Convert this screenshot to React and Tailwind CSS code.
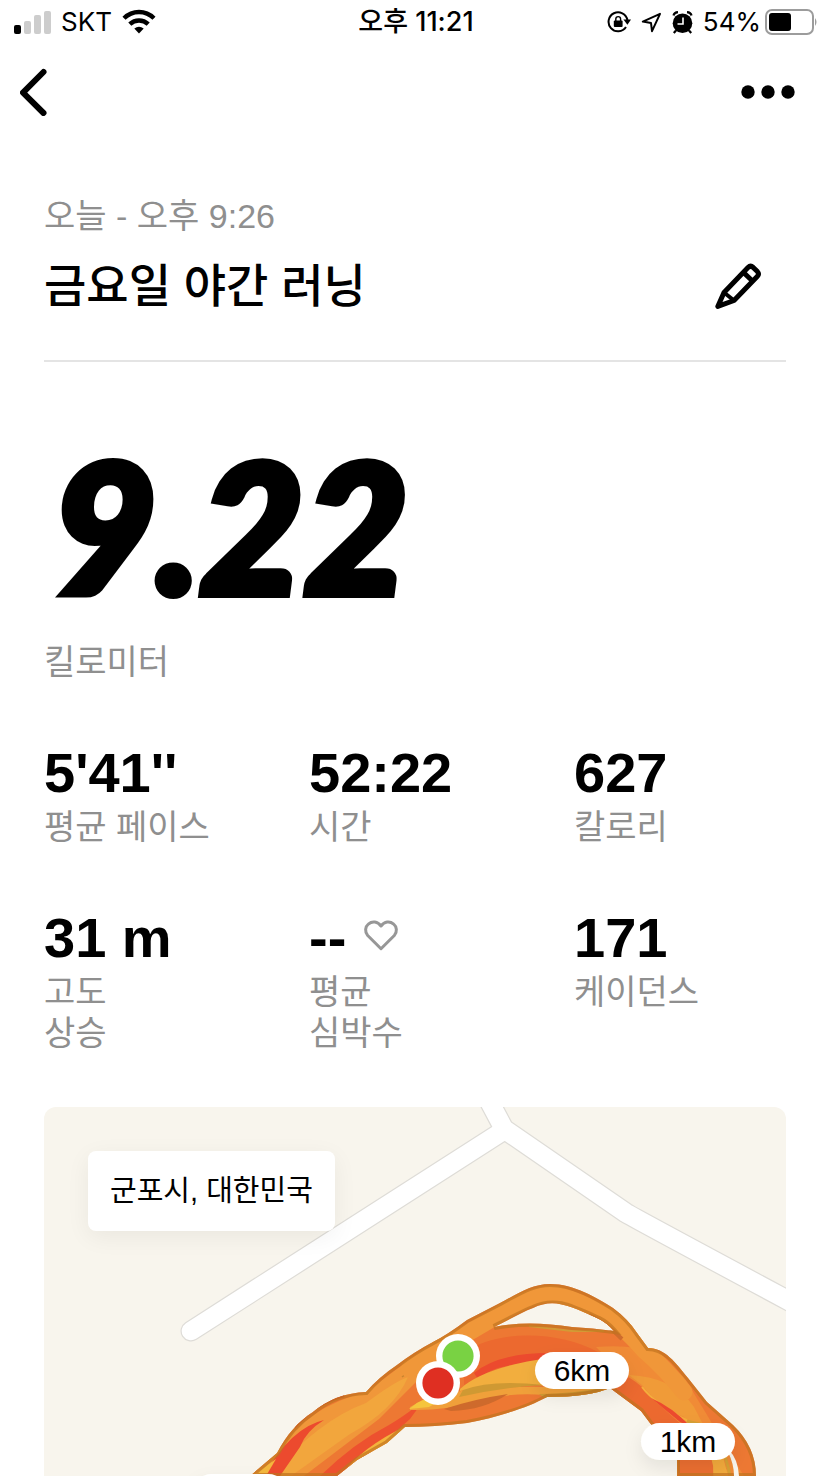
import React from 'react';

const stats = [
  { value: "5'41''", label: ['평균 페이스'] },
  { value: '52:22', label: ['시간'] },
  { value: '627', label: ['칼로리'] },
  { value: '31 m', label: ['고도', '상승'] },
  { value: '--', label: ['평균', '심박수'], heart: true },
  { value: '171', label: ['케이던스'] },
];

const markers = [
  { x: 491, y: 245, text: '6km' },
  { x: 597, y: 316, text: '1km' },
];

const TRACK =
  'M206 369 L233 346 C243 327 254 315 269 305 Q292 286 322 285 Q335 270 353 258 Q370 245 389 235 Q403 228 423 213 L456 196 C475 186 488 177 506 177 C530 177 553 191 569 201 Q584 212 593 226 L604 241 C621 241 632 256 644 271 L663 295 L689 318 Q712 340 712 369 L633 369 L633 350 L606 316 L597 304 L566 281 Q545 290 503 290 C485 300 455 310 423 316 Q390 320 361 320 L343 336 L313 353 L293 369 Z M450 220 C465 213 478 205 489 201 C510 191 524 198 555 212 Q563 216 570 224 Q548 221 528 220 C500 216 475 215 450 220 Z';

function StatusBar() {
  return (
    <div className="grid h-11 grid-cols-3 items-center pl-3.5 pr-3 font-['Inter','Noto_Sans_CJK_KR',sans-serif] text-[26px] leading-8">
      <div className="flex items-center gap-2.5">
        <svg width="37" height="24" viewBox="0 0 37 24" aria-hidden="true">
          <rect x="0" y="15" width="7" height="9" rx="2" fill="#000" />
          <rect x="10" y="11" width="7" height="13" rx="2" fill="#cdcdcd" />
          <rect x="20" y="5" width="7" height="19" rx="2" fill="#cdcdcd" />
          <rect x="30" y="1" width="7" height="23" rx="2" fill="#cdcdcd" />
        </svg>
        <span>SKT</span>
        <svg width="34" height="26" viewBox="0 0 34 26" fill="none" stroke="#000" strokeWidth="4.4" aria-hidden="true">
          <path d="M2 9.2 C10.5 .9 23.5 .9 32 9.2" />
          <path d="M7.8 15.2 C13 10.2 21 10.2 26.2 15.2" />
          <path d="M12.3 19.6 Q17 15.8 21.7 19.6 L17 24.6 Z" fill="#000" stroke="none" />
        </svg>
      </div>
      <div className="text-center text-[27px] font-medium">오후 11:21</div>
      <div className="flex items-center justify-end gap-2.5">
        <svg width="24" height="24" viewBox="0 0 24 24" fill="none" stroke="#000" strokeWidth="2" aria-hidden="true">
          <path d="M20.4 10 A9.5 9.5 0 1 0 19 17" />
          <path d="M16.4 9.6 H24 L20.4 14.8 Z" fill="#000" stroke="none" />
          <rect x="6.8" y="10.5" width="8.8" height="6.5" rx="1" fill="#000" stroke="none" />
          <path d="M8.8 11 V9 A2.4 2.4 0 0 1 13.6 9 V11" strokeWidth="1.4" />
        </svg>
        <svg width="21" height="21" viewBox="0 0 21 21" fill="none" stroke="#000" strokeWidth="2" strokeLinejoin="round" aria-hidden="true">
          <path d="M19 1.8 L1.8 9.6 L10 11 L11 19.2 Z" />
        </svg>
        <svg width="21" height="23" viewBox="0 0 21 23" aria-hidden="true">
          <circle cx="10.5" cy="12.3" r="9.8" />
          <path d="M1.5 4.6 Q2.2 1.4 6 1.2 M19.5 4.6 Q18.8 1.4 15 1.2 M4 19.5 L1.8 22 M17 19.5 L19.2 22" fill="none" stroke="#000" strokeWidth="2.2" />
          <path d="M11 6.5 V13 H5.5" fill="none" stroke="#fff" strokeWidth="1.6" />
        </svg>
        <div className="flex items-center gap-1">
          <span>54%</span>
          <svg width="53" height="26" viewBox="0 0 53 26" aria-hidden="true">
            <rect x="1" y="1" width="47" height="24" rx="6" fill="none" stroke="#9c9c9c" strokeWidth="2" />
            <rect x="4" y="4" width="22" height="18" rx="3" />
            <path d="M50 9 Q53 13 50 17 Z" fill="#9c9c9c" />
          </svg>
        </div>
      </div>
    </div>
  );
}

function Stat({ value, label, heart }) {
  return (
    <div>
      <dd className="flex items-center gap-4 whitespace-pre text-[56px] font-bold leading-[60px]">
        {value}
        {heart && (
          <svg width="38" height="38" viewBox="0 0 24 24" fill="none" stroke="#979797" strokeWidth="1.9" strokeLinejoin="round" aria-hidden="true">
            <path d="M12 18.8 L3.6 10.4 C1.6 8.1 2 4.8 4 3.2 C6.5 1.1 9.8 1.5 12 4.4 C14.2 1.5 17.5 1.1 20 3.2 C22 4.8 22.4 8.1 20.4 10.4 Z" />
          </svg>
        )}
      </dd>
      <dt className="pt-1 text-[34px] leading-[41px] text-[#8f8f8f]">
        {label.map((line) => (
          <span key={line} className="block">{line}</span>
        ))}
      </dt>
    </div>
  );
}

function RouteMap() {
  return (
    <svg className="absolute inset-0 h-full w-full" viewBox="0 0 742 369" preserveAspectRatio="xMidYMin slice" aria-hidden="true">
      <defs>
        <clipPath id="track">
          <path d={TRACK} clipRule="evenodd" />
        </clipPath>
        <filter id="soft" x="-30%" y="-60%" width="160%" height="260%">
          <feDropShadow dx="0" dy="8" stdDeviation="9" floodOpacity="0.08" />
        </filter>
      </defs>

      {/* roads */}
      <g fill="none" strokeLinecap="round" strokeLinejoin="round">
        <g stroke="#dedcd7" strokeWidth="21">
          <path d="M147 224 L459 24" />
          <path d="M443 -10 L460 22 L582 106 Q592 112 760 202" />
        </g>
        <g stroke="#fff" strokeWidth="18.6">
          <path d="M147 224 L459 24" />
          <path d="M443 -10 L460 22 L582 106 Q592 112 760 202" />
        </g>
      </g>

      {/* pace-coloured laps */}
      <g clipPath="url(#track)" fill="none">
        <rect width="742" height="369" fill="#ed7833" />
        {/* left side */}
        <path d="M206 369 L233 346 Q262 300 322 285 L389 235 L440 207 L385 262 L335 312 L260 369 Z" fill="#f0973a" />
        <path d="M226 369 Q275 313 322 296 Q350 275 364 270 Q350 303 306 327 L247 369 Z" fill="#f2a63d" />
        <path d="M219 369 Q248 320 280 313 Q262 324 256 340 L236 369 Z" fill="#ec4a2e" />
        <path d="M208 369 L232 352 L222 369 Z" fill="#f4b73d" />
        <path d="M276 369 Q310 336 345 318 Q375 300 385 286 L366 312 Q330 345 294 369 Z" fill="#ed512f" />
        <path d="M296 369 Q318 340 362 319 L344 336 Z" fill="#f3b33c" />
        <path d="M250 320 Q270 296 300 288" stroke="#d04c28" strokeWidth="4" />
        <path d="M358 270 L373 259" stroke="#c8842e" strokeWidth="1.5" />

        {/* middle of the bundle */}
        <path d="M420 246 C455 220 520 226 552 244 Q590 262 596 286 Q570 258 490 257 L420 278 Z" fill="#ec692f" />
        <path d="M430 266 Q454 246 505 246 L490 256 Q450 257 434 272 Z" fill="#ec4a2e" />
        <path d="M416 282 Q440 260 505 251 L505 279 Q460 275 416 284 Z" fill="#f2ae3e" />
        <path d="M366 300 Q400 278 505 280 L570 280 Q530 296 500 288 Q470 285 440 293 Q400 304 366 303 Z" fill="#f0a03a" />
        <path d="M419 283 Q448 272 500 278 Q460 280 415 290 Z" fill="#cf9933" />
        <path d="M365 302 Q382 286 403 290 L385 300 Z" fill="#f5c53d" />
        <path d="M400 302 Q430 292 464 287 Q440 303 407 304 Z" fill="#ce6a2c" />
        <path d="M495 287 Q530 287 560 280 L556 288 Q525 293 500 291 Z" fill="#cf9933" />
        <path d="M485 219 L528 224 L560 224" stroke="#d39a35" strokeWidth="2" />

        {/* right side */}
        <path d="M552 240 Q590 237 606 246 L640 270 L700 369 L633 369 L592 280 Z" fill="#f08b36" />
        <path d="M545 255 Q590 265 612 295 L654 332 L640 369 L633 350 L566 281 Z" fill="#ec692f" />
        <path d="M585 268 Q630 270 650 300 L686 369 L668 369 L640 310 Q615 300 598 278 Z" fill="#f09b38" />
        <path d="M598 280 Q610 296 644 314" stroke="#f4ae3c" strokeWidth="2" />
        <path d="M607 291 Q628 300 646 319 L636 315 Z" fill="#ec4a2e" />
        <path d="M634 345 H669 V369 H634 Z" fill="#ec6f31" />
        <path d="M667 350 Q670 360 670 369 H684 L679 350 Z" fill="#f2aa3c" />
        <path d="M643 314 L659 318 Q680 335 686 369" stroke="#d6a034" strokeWidth="3" />

        {/* wide loop over the top */}
        <path d="M365 262 L395 243 L456 207 Q486 188 506 187 Q520 186 565 210 Q583 223 600 243 Q622 262 640 285" stroke="#f09739" strokeWidth="17" strokeLinecap="round" />
        <path d="M545 208 Q562 216 578 232" stroke="#cf6c2c" strokeWidth="4" />
        <path d={TRACK} stroke="#c07420" strokeOpacity="0.7" strokeWidth="6" />
      </g>
      <path d="M684 345 Q690 357 690 369 H695 Q694 352 685 343 Z" fill="#f8f5ed" />

      <circle cx="414" cy="249" r="22" fill="#fff" />
      <circle cx="414" cy="249" r="15.6" fill="#79d243" />
      <circle cx="394" cy="276" r="22" fill="#fff" />
      <circle cx="394" cy="276" r="15.6" fill="#df2f22" />
      {markers.map((m) => (
        <g key={m.text}>
          <rect x={m.x} y={m.y} width="94" height="37" rx="18.5" fill="#fff" filter="url(#soft)" />
          <text x={m.x + 47} y={m.y + 29} textAnchor="middle" fontSize="30" fontFamily="'Liberation Sans', sans-serif">
            {m.text}
          </text>
        </g>
      ))}
      <rect x="149" y="367" width="94" height="37" rx="18.5" fill="#fff" filter="url(#soft)" />
    </svg>
  );
}

export default function App() {
  return (
    <div className="flex min-h-screen flex-col bg-white font-['Liberation_Sans','Noto_Sans_CJK_KR',sans-serif] text-black">
      <StatusBar />

      <nav className="flex h-24 items-center justify-between px-4">
        <button type="button" aria-label="뒤로" className="p-1">
          <svg width="28" height="48" viewBox="0 0 28 48" fill="none" stroke="#000" strokeWidth="6" strokeLinecap="round" strokeLinejoin="round">
            <path d="M23.5 4 L3 24.7 L23.5 45" />
          </svg>
        </button>
        <button type="button" aria-label="더 보기" className="p-4">
          <svg width="60" height="14" viewBox="0 0 60 14">
            <circle cx="10" cy="7" r="6.7" />
            <circle cx="30" cy="7" r="6.7" />
            <circle cx="50" cy="7" r="6.7" />
          </svg>
        </button>
      </nav>

      <main className="flex flex-1 flex-col px-11">
        <header className="flex items-end justify-between border-b-2 border-[#e4e4e4] pb-11 pt-14">
          <div>
            <p className="text-[34px] leading-10 text-[#8f8f8f]">오늘 - 오후 9:26</p>
            <h1 className="mt-5 text-[46px] font-medium leading-[60px]">금요일 야간 러닝</h1>
          </div>
          <button type="button" aria-label="이름 편집" className="mb-1.5 mr-6">
            <svg width="48" height="48" viewBox="0 0 48 48" fill="none" stroke="#000" strokeWidth="5" strokeLinejoin="round">
              <path d="M3.8 44.4 L10 30.5 L34 5.6 Q36.5 3 39.2 5.4 L43.4 9.6 Q45.6 12 43.2 14.6 L20 38.5 Z" />
              <path d="M29 10 L39 19.5" />
              <path d="M10 30.5 L20 38.5" strokeWidth="4" />
            </svg>
          </button>
        </header>

        <section className="pt-[72px]">
          <p className="pl-2 font-['Lato',sans-serif] text-[180px] font-black italic leading-[180px] [-webkit-text-stroke:8px_black]">9.22</p>
          <p className="mt-7 text-[34px] leading-[41px] text-[#8f8f8f]">킬로미터</p>
        </section>

        <dl className="mt-[60px] grid grid-cols-3 gap-x-[53px] gap-y-[60px]">
          {stats.map((s) => (
            <Stat key={s.value} {...s} />
          ))}
        </dl>

        <section className="relative mt-[53px] min-h-[369px] flex-1 overflow-hidden rounded-t-xl bg-[#f8f5ed]">
          <RouteMap />
          <p className="absolute left-11 top-11 rounded-lg bg-white px-[22px] py-5 text-[29px] leading-10 shadow-[0_6px_24px_rgba(0,0,0,0.06)]">
            군포시, 대한민국
          </p>
        </section>
      </main>
    </div>
  );
}
